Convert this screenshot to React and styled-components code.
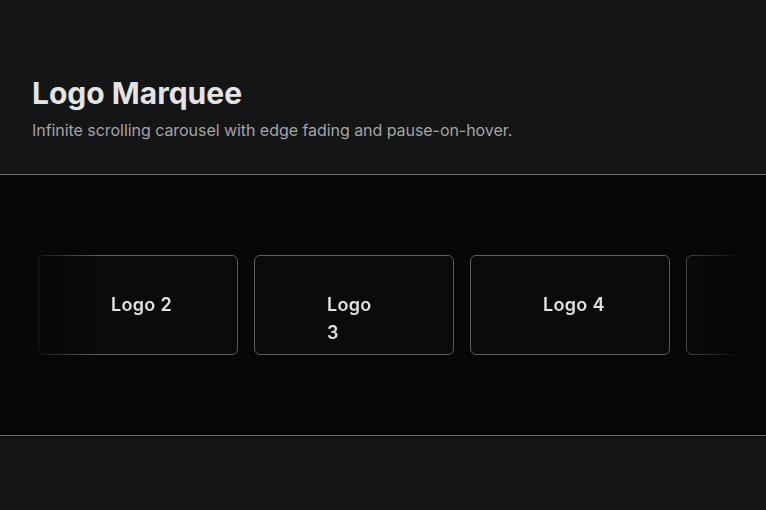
import React from 'react';
import styled, { createGlobalStyle } from 'styled-components';

const logos = [
  { id: 1, name: 'Logo 1' },
  { id: 2, name: 'Logo 2' },
  { id: 3, name: 'Logo 3', wrap: true },
  { id: 4, name: 'Logo 4' },
  { id: 5, name: 'Logo 5' },
  { id: 6, name: 'Logo 6' },
];

function App() {
  return (
    <>
      <GlobalStyle />
      <Page>
        <Header>
          <Title>Logo Marquee</Title>
          <Subtitle>Infinite scrolling carousel with edge fading and pause-on-hover.</Subtitle>
        </Header>
        <MarqueeSection>
          <Viewport>
            <Track $offset={-202}>
              {logos.map((logo) => (
                <Card key={logo.id}>
                  <Label $wrap={logo.wrap}>{logo.name}</Label>
                </Card>
              ))}
            </Track>
          </Viewport>
        </MarqueeSection>
        <Footer />
      </Page>
    </>
  );
}

export default App;

const GlobalStyle = createGlobalStyle`
  html, body {
    margin: 0;
    padding: 0;
    background: #141517;
  }
  body {
    font-family: Inter, "Noto Sans", sans-serif;
  }
`;

const Page = styled.div`
  min-height: 510px;
  display: flex;
  flex-direction: column;
  background: #141517;
`;

const Header = styled.header`
  padding: 75px 32px 33px;
  border-bottom: 1px solid #6a6a6a;
`;

const Title = styled.h1`
  margin: 0;
  font-size: 30px;
  line-height: 36px;
  font-weight: 700;
  color: #e4e4e4;
`;

const Subtitle = styled.p`
  margin: 8px 0 0;
  font-size: 16px;
  line-height: 22px;
  color: #a4a4a4;
  letter-spacing: -0.05px;
`;

const MarqueeSection = styled.section`
  background: #070707;
  padding: 80px 24px;
  border-bottom: 1px solid #6a6a6a;
`;

const Viewport = styled.div`
  overflow: hidden;
  mask-image: linear-gradient(to right, transparent 0%, #000 10%, #000 90%, transparent 100%);
  -webkit-mask-image: linear-gradient(to right, transparent 0%, #000 10%, #000 90%, transparent 100%);
`;

const Track = styled.div`
  display: flex;
  gap: 16px;
  width: max-content;
  transform: translateX(${(p) => p.$offset}px);
`;

const Card = styled.div`
  flex: 0 0 auto;
  box-sizing: border-box;
  width: 200px;
  height: 100px;
  border: 1px solid #5c5c5c;
  border-radius: 6px;
  background: #0b0b0b;
  display: flex;
  align-items: center;
  justify-content: center;
`;

const Label = styled.span`
  display: block;
  width: 54px;
  height: 28px;
  font-size: 18px;
  line-height: 28px;
  font-weight: 600;
  color: #e2e2e2;
  letter-spacing: 0.3px;
  white-space: ${(p) => (p.$wrap ? 'normal' : 'nowrap')};
`;

const Footer = styled.div`
  flex: 1;
  background: #141517;
`;
